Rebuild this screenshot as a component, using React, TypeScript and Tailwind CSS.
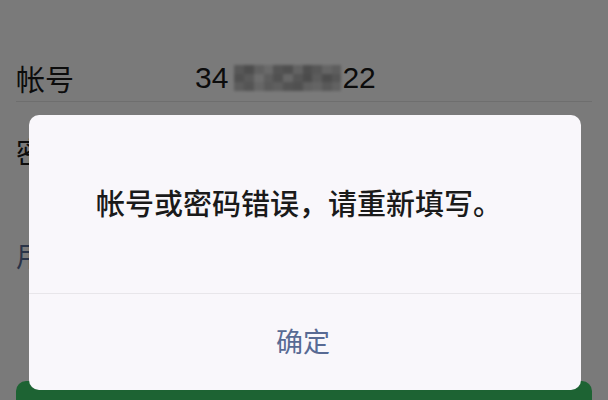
const cjk = "font-['Noto_Sans_CJK_SC',sans-serif]";
const latin = "font-['Liberation_Sans','Noto_Sans_CJK_SC',sans-serif]";

// mosaic used to hide the middle digits of the account
const mosaic = [
  ["bg-[#b8b8b8]", "bg-[#a2a2a2]", "bg-[#c9c9c9]", "bg-[#dedede]", "bg-[#b0b0b0]", "bg-[#a6a6a6]", "bg-[#cfcfcf]", "bg-[#a4a4a4]", "bg-[#b6b6b6]", "bg-[#d4d4d4]", "bg-[#c4c4c4]"],
  ["bg-[#a8a8a8]", "bg-[#bdbdbd]", "bg-[#e4e4e4]", "bg-[#c3c3c3]", "bg-[#a9a9a9]", "bg-[#d8d8d8]", "bg-[#b2b2b2]", "bg-[#9e9e9e]", "bg-[#c0c0c0]", "bg-[#a0a0a0]", "bg-[#b4b4b4]"],
  ["bg-[#c2c2c2]", "bg-[#b0b0b0]", "bg-[#d6d6d6]", "bg-[#bcbcbc]", "bg-[#c6c6c6]", "bg-[#aeaeae]", "bg-[#a8a8a8]", "bg-[#c8c8c8]", "bg-[#d2d2d2]", "bg-[#bababa]", "bg-[#cccccc]"],
];

export default function App() {
  return (
    <div className={`relative w-[608px] h-[400px] overflow-hidden bg-white ${cjk}`}>
      {/* login page underneath */}
      <div className="px-4 pt-[55px]">
        <div className="flex items-center h-[46px]">
          <span className="w-[179px] text-[29px] leading-none text-[#1a1a1a]">帐号</span>
          <span className={`flex items-center text-[30px] leading-none text-[#1a1a1a] ${latin}`}>
            34
            <span className="ml-[6px] mr-[1px] flex flex-col w-[107px] h-[26px] blur-[1.5px]">
              {mosaic.map((row, i) => (
                <span key={i} className="flex flex-1">
                  {row.map((c, j) => (
                    <span key={j} className={`flex-1 ${c}`} />
                  ))}
                </span>
              ))}
            </span>
            22
          </span>
        </div>
        <div className="h-px bg-[#e6e6e6]" />
        <div className="flex items-center h-[98px]">
          <span className="w-[179px] text-[29px] leading-none text-[#1a1a1a]">密码</span>
          <span className="text-[29px] leading-none text-[#b2b2b2]">请填写密码</span>
        </div>
        <div className="mt-[41px] h-[28px] flex items-center text-[28px] leading-none text-[#576b95]">
          用短信验证码登录
        </div>
        <div className="mt-[112px] h-[100px] rounded-[10px] bg-[#3ecf6c]" />
      </div>

      {/* dim overlay */}
      <div className="absolute inset-0 bg-black/[0.52]" />

      {/* alert dialog */}
      <div className="absolute left-[29px] top-[115px] w-[552px] h-[275px] flex flex-col rounded-[10px] bg-[#f9f7fb] overflow-hidden">
        <div className="h-[178px] flex items-center justify-center pr-[12px] pb-[3px]">
          <p className="text-[29px] leading-none font-medium text-[#1a1a1a]">帐号或密码错误，请重新填写。</p>
        </div>
        <div className="h-px bg-[#e8e6ea]" />
        <button className="flex-1 flex items-center justify-center pb-[4px] pr-[4px] text-[27px] leading-none text-[#586a94]">
          确定
        </button>
      </div>
    </div>
  );
}
